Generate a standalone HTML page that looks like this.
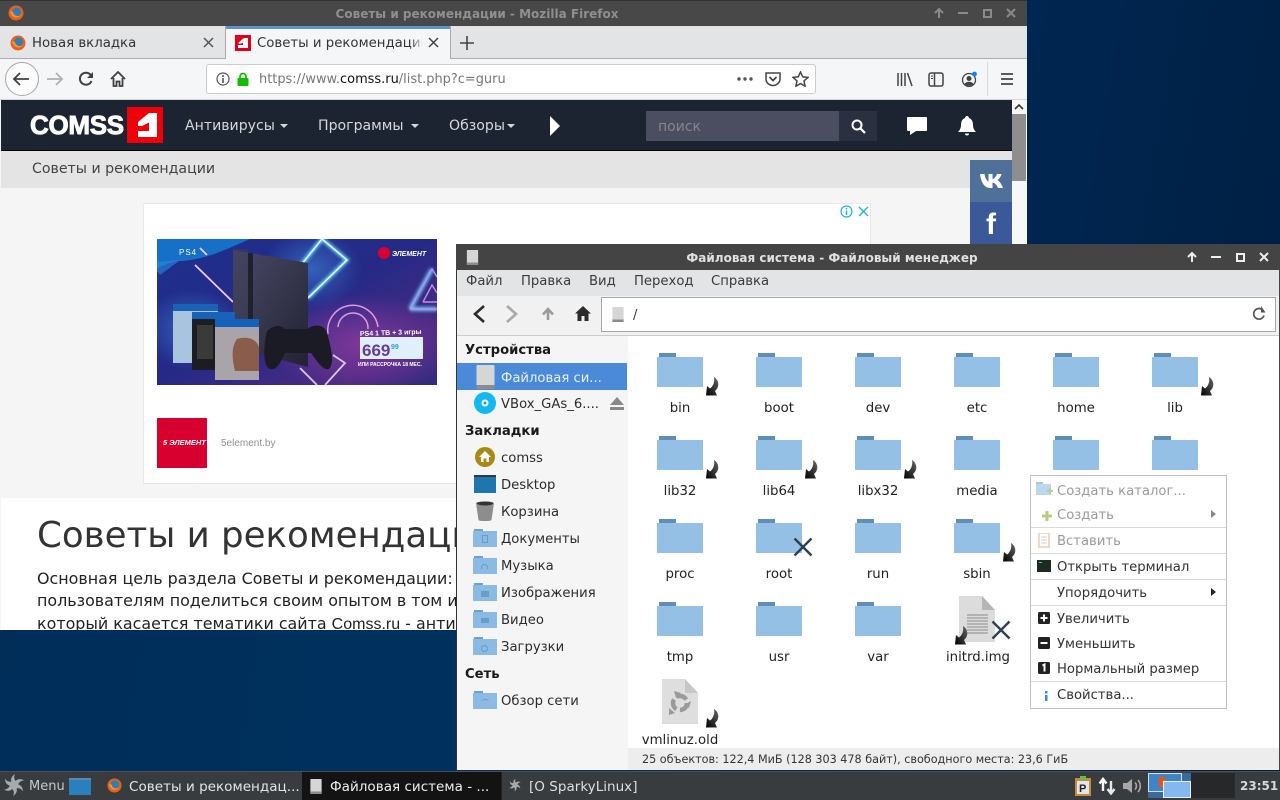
<!DOCTYPE html>
<html lang="ru"><head><meta charset="utf-8"><title>SparkyLinux</title>
<style>
html,body{margin:0;padding:0}
body{width:1280px;height:800px;overflow:hidden;position:relative;background:linear-gradient(100deg,#002d58 0%,#00315f 45%,#002650 75%,#001e40 100%);font-family:"DejaVu Sans","Liberation Sans",sans-serif;font-size:13px;color:#222}
div,span,svg{position:absolute;display:block}
.t{white-space:nowrap;line-height:16px}
.c{transform:translateX(-50%)}
.b{font-weight:bold}
b{font-weight:normal;color:#111}
.lbl{font-size:13.300px;color:#222;line-height:16px;white-space:nowrap;transform:translateX(-50%)}
.sb{font-size:13.200px;color:#2c2c2c;left:501px;line-height:16px;white-space:nowrap}
.sh{font-size:13.200px;font-weight:bold;color:#1a1a1a;left:465px;line-height:16px;white-space:nowrap}
.m{font-size:13.200px;color:#333;left:1057px;line-height:16px;white-space:nowrap}
.mf{color:#9a9a9a}
.sep{left:1031px;width:195px;height:1px;background:#d8d8d8}
.fm{font-size:13.200px;color:#3a3a3a;top:274px;line-height:16px}
.nv{font-size:14.100px;color:#d5d7da;top:118px;line-height:16px;white-space:nowrap}
.tk{font-size:13.550px;line-height:18px;white-space:nowrap;top:778px}
</style></head><body>
<svg width="0" height="0" style="left:0;top:0">
<defs>
<symbol id="fo" viewBox="0 0 46 34"><rect x="2" y="0" width="17" height="5" fill="#5f8fb8"/><rect x="0" y="4" width="46" height="30" fill="#94c0e5"/></symbol>
<linearGradient id="lg" x1="0" y1="1" x2="1" y2="0"><stop offset="0" stop-color="#000"/><stop offset="1" stop-color="#666"/></linearGradient>
<symbol id="ln" viewBox="0 0 13 19"><path d="M8 0C13 3 14 10 9 14L11 18.500 0 18.500 1 9 4 11.500C7 9.500 9 5 8 0Z" fill="url(#lg)"/></symbol>
<symbol id="xx" viewBox="0 0 20 20"><path d="M1.500 1.500L18.500 18.500M18.500 1.500L1.500 18.500" stroke="#2f4055" stroke-width="2.400" fill="none"/></symbol>
<symbol id="sf" viewBox="0 0 24 18"><rect x="1" y="0" width="9" height="3" fill="#6ba0cf"/><rect x="0" y="2" width="24" height="16" fill="#8bbbe4"/></symbol>
<symbol id="drv" viewBox="0 0 18 24"><rect width="18" height="24" rx="1" fill="#d6d6d6"/><rect y="20" width="18" height="4" fill="#8c8c8c"/></symbol>
<symbol id="ffx" viewBox="0 0 16 16"><circle cx="8" cy="8" r="7.500" fill="#e8601f"/><circle cx="8.500" cy="7" r="4.500" fill="#2e7fb8"/><path d="M2 6C3 13 10 15 14 9 12 12 6 12 5 7Z" fill="#f2952b"/></symbol>
<symbol id="spk" viewBox="0 0 24 24"><g fill="#a8aaac"><path d="M12 12C8 9 8 4 13 1 11 5 13 8 15 9Z"/><path d="M12 12C8 9 8 4 13 1 11 5 13 8 15 9Z" transform="rotate(60 12 12)"/><path d="M12 12C8 9 8 4 13 1 11 5 13 8 15 9Z" transform="rotate(120 12 12)"/><path d="M12 12C8 9 8 4 13 1 11 5 13 8 15 9Z" transform="rotate(180 12 12)"/><path d="M12 12C8 9 8 4 13 1 11 5 13 8 15 9Z" transform="rotate(240 12 12)"/><path d="M12 12C8 9 8 4 13 1 11 5 13 8 15 9Z" transform="rotate(300 12 12)"/></g></symbol>
</defs></svg>

<!-- Firefox window -->
<div style="left:0;top:0;width:1027px;height:630px;background:#f5f5f5;overflow:hidden">
 <div style="left:0;top:0;width:1027px;height:26px;background:#484848;border-top:1px solid #333;box-sizing:border-box"></div>
 <svg style="left:8px;top:5px" width="16" height="16"><use href="#ffx"/></svg>
 <div class="t b c" style="left:477px;top:6px;font-size:12px;color:#8f8f8f">Советы и рекомендации - Mozilla Firefox</div>
 <svg style="left:933px;top:7px" width="12" height="12" viewBox="0 0 12 12"><path d="M6 11V2M2 6l4-4 4 4" stroke="#8a8a8a" stroke-width="2" fill="none"/></svg>
 <div style="left:958px;top:12px;width:10px;height:2px;background:#8a8a8a"></div>
 <div style="left:983px;top:9px;width:5px;height:5px;border:2px solid #8a8a8a"></div>
 <svg style="left:1006px;top:8px" width="10" height="10" viewBox="0 0 10 10"><path d="M1 1L9 9M9 1L1 9" stroke="#8a8a8a" stroke-width="2"/></svg>

 <!-- tabs -->
 <div style="left:0;top:26px;width:1027px;height:33px;background:#e3e4e6;border-bottom:1px solid #aeaeae;box-sizing:border-box"></div>
 <div style="left:225px;top:26px;width:226px;height:33px;background:#f5f6f7;border-left:1px solid #aaa;border-right:1px solid #aaa;box-sizing:border-box"></div>
 <div style="left:226px;top:26px;width:224px;height:3px;background:#5b93c9"></div>
 <svg style="left:10px;top:35px" width="16" height="16"><use href="#ffx"/></svg>
 <div class="t" style="left:32px;top:36px;font-size:13.300px;color:#333">Новая вкладка</div>
 <svg style="left:203px;top:37px" width="11" height="11" viewBox="0 0 11 11"><path d="M1 1L10 10M10 1L1 10" stroke="#555" stroke-width="1.500"/></svg>
 <div style="left:235px;top:35px;width:16px;height:16px;background:#e0001a"></div>
 <svg style="left:235px;top:35px" width="16" height="16" viewBox="0 0 16 16"><path d="M3 8L9 3H13V13H3V10H8V7.500L5 9Z" fill="#fff"/></svg>
 <div style="left:257px;top:34px;width:165px;height:18px;overflow:hidden"><span class="t" style="left:0;top:2px;font-size:13.300px;color:#333">Советы и рекомендации</span></div>
 <div style="left:410px;top:34px;width:14px;height:18px;background:linear-gradient(90deg,rgba(245,246,247,0),#f5f6f7)"></div>
 <svg style="left:428px;top:37px" width="11" height="11" viewBox="0 0 11 11"><path d="M1 1L10 10M10 1L1 10" stroke="#444" stroke-width="1.500"/></svg>
 <svg style="left:460px;top:36px" width="14" height="14" viewBox="0 0 14 14"><path d="M7 0V14M0 7H14" stroke="#444" stroke-width="1.600"/></svg>

 <!-- nav -->
 <div style="left:0;top:59px;width:1027px;height:41px;background:#f5f6f7;border-bottom:1px solid #d4d4d4;box-sizing:border-box"></div>
 <div style="left:5px;top:62px;width:32px;height:32px;border-radius:50%;background:#fcfcfc;border:1px solid #a8a8a8"></div>
 <svg style="left:12px;top:71px" width="18" height="16" viewBox="0 0 18 16"><path d="M17 8H2M8 2L2 8l6 6" stroke="#404040" stroke-width="1.800" fill="none"/></svg>
 <svg style="left:46px;top:71px" width="18" height="16" viewBox="0 0 18 16"><path d="M1 8H16M10 2l6 6-6 6" stroke="#b0b0b0" stroke-width="1.800" fill="none"/></svg>
 <svg style="left:78px;top:71px" width="16" height="16" viewBox="0 0 16 16"><path d="M13.500 10A6 6 0 1 1 13 4.500" stroke="#404040" stroke-width="2" fill="none"/><path d="M15 1V7H9Z" fill="#404040"/></svg>
 <svg style="left:110px;top:71px" width="16" height="16" viewBox="0 0 16 16"><path d="M1 8L8 1l7 7M3.500 7V15H6.500V10.500H9.500V15H12.500V7" stroke="#404040" stroke-width="1.800" fill="none"/></svg>
 <div style="left:206px;top:64px;width:610px;height:30px;background:#fff;border:1px solid #ccc;border-radius:3px;box-sizing:border-box"></div>
 <svg style="left:216px;top:72px" width="14" height="14" viewBox="0 0 14 14"><circle cx="7" cy="7" r="6" stroke="#555" stroke-width="1.200" fill="none"/><path d="M7 6V11M7 3V5" stroke="#555" stroke-width="1.600"/></svg>
 <svg style="left:236px;top:72px" width="14" height="14" viewBox="0 0 14 14"><path d="M4 7V4.500a3 3 0 0 1 6 0V7" stroke="#12bc00" stroke-width="1.700" fill="none"/><rect x="1.500" y="6" width="11" height="8" rx="1" fill="#12bc00"/></svg>
 <div class="t" style="left:259px;top:72px;font-size:12.950px;color:#777">https://www.<b>comss.ru</b>/list.php?c=guru</div>
 <svg style="left:736px;top:76px" width="18" height="6"><circle cx="3" cy="3" r="1.700" fill="#555"/><circle cx="9" cy="3" r="1.700" fill="#555"/><circle cx="15" cy="3" r="1.700" fill="#555"/></svg>
 <svg style="left:765px;top:71px" width="16" height="16" viewBox="0 0 16 16"><path d="M1 2H15V8A7 6.500 0 0 1 1 8Z" stroke="#444" stroke-width="1.500" fill="none"/><path d="M4.500 6L8 9.500 11.500 6" stroke="#444" stroke-width="1.800" fill="none"/></svg>
 <svg style="left:792px;top:71px" width="17" height="16" viewBox="0 0 17 16"><path d="M8.500 1L10.700 5.800 16 6.400 12 10 13.100 15.200 8.500 12.600 3.900 15.200 5 10 1 6.400 6.300 5.800Z" stroke="#444" stroke-width="1.500" fill="none"/></svg>
 <svg style="left:897px;top:72px" width="16" height="15" viewBox="0 0 16 15"><path d="M1 1V14M4.500 1V14M8 1V14M10.500 1L15 14" stroke="#444" stroke-width="1.500"/></svg>
 <svg style="left:928px;top:72px" width="16" height="15" viewBox="0 0 16 15"><rect x="1" y="1" width="14" height="13" rx="2" stroke="#444" stroke-width="1.500" fill="none"/><path d="M6.500 1V14" stroke="#444" stroke-width="1.500"/><path d="M3 4H5M3 6.500H5" stroke="#444"/></svg>
 <svg style="left:961px;top:71px" width="17" height="17" viewBox="0 0 17 17"><circle cx="8" cy="9" r="6.500" stroke="#444" stroke-width="1.300" fill="none"/><circle cx="8" cy="7.500" r="2.500" fill="#444"/><path d="M3.500 13C5 10 11 10 12.500 13 10 15.500 6 15.500 3.500 13Z" fill="#444"/><circle cx="13.500" cy="3" r="2.400" fill="#0a84ff"/></svg>
 <div style="left:987px;top:62px;width:1px;height:34px;background:#d8d8d8"></div>
 <svg style="left:1000px;top:72px" width="14" height="14" viewBox="0 0 14 14"><path d="M1 2H13M1 7H13M1 12H13" stroke="#444" stroke-width="1.800"/></svg>

 <!-- page -->
 <div style="left:1px;top:100px;width:1011px;height:530px;background:#f5f5f5;overflow:hidden">
  <div style="left:0;top:0;width:1011px;height:50px;background:#1c2331;border-bottom:1px solid #000"></div>
  <div style="left:0;top:51px;width:1011px;height:37px;background:#e4e4e4"></div>
  <div style="left:0;top:398px;width:1011px;height:132px;background:#fff"></div>
 </div>
 <div class="t b" style="left:30px;top:110px;font-family:'Liberation Sans',sans-serif;font-size:26px;line-height:30px;color:#fff;letter-spacing:-.3px;-webkit-text-stroke:.9px #fff">COMSS</div>
 <div style="left:127px;top:107px;width:36px;height:36px;background:#f00008"></div>
 <svg style="left:127px;top:107px" width="36" height="36" viewBox="0 0 36 36"><path d="M11 15L22 6H30V30H11V24H22V15.500L15 19H11Z" fill="#fff"/></svg>
 <div class="nv" style="left:185px">Антивирусы</div>
 <div style="left:280px;top:124px;border:4px solid transparent;border-top:4px solid #d5d7da;border-bottom:0"></div>
 <div class="nv" style="left:318px">Программы</div>
 <div style="left:411px;top:124px;border:4px solid transparent;border-top:4px solid #d5d7da;border-bottom:0"></div>
 <div class="nv" style="left:449px">Обзоры</div>
 <div style="left:507px;top:124px;border:4px solid transparent;border-top:4px solid #d5d7da;border-bottom:0"></div>
 <div style="left:550px;top:116px;border-left:10px solid #fff;border-top:10px solid transparent;border-bottom:10px solid transparent"></div>
 <div style="left:646px;top:111px;width:193px;height:30px;background:#4b4d61"></div>
 <div style="left:839px;top:111px;width:38px;height:30px;background:#2b3040"></div>
 <div class="t" style="left:658px;top:119px;font-size:14px;color:#85868f">поиск</div>
 <svg style="left:851px;top:119px" width="15" height="15" viewBox="0 0 15 15"><circle cx="6" cy="6" r="4.500" stroke="#fff" stroke-width="2" fill="none"/><path d="M9.500 9.500L14 14" stroke="#fff" stroke-width="2.200"/></svg>
 <svg style="left:907px;top:117px" width="21" height="19" viewBox="0 0 21 19"><path d="M1 0H19a1 1 0 0 1 1 1V13a1 1 0 0 1-1 1H9L3 18V14H1a1 1 0 0 1-1-1V1a1 1 0 0 1 1-1Z" fill="#fff"/></svg>
 <svg style="left:958px;top:116px" width="18" height="20" viewBox="0 0 18 20"><path d="M9 0C10 0 11 1 11 2 14 3 15 6 15 9 15 12 16 14 18 16H0C2 14 3 12 3 9 3 6 4 3 7 2 7 1 8 0 9 0Z" fill="#fff"/><path d="M7 17.500H11A2 2 0 0 1 7 17.500Z" fill="#fff"/></svg>
 <div class="t" style="left:32px;top:161px;font-size:14.150px;color:#444">Советы и рекомендации</div>
 <div style="left:970px;top:160px;width:42px;height:42px;background:#4f7099"></div>
 <div style="left:970px;top:202px;width:42px;height:44px;background:#3b5998"></div>
 <svg style="left:980px;top:173px" width="23" height="15" viewBox="0 0 23 15"><path d="M0 1H4.500C5 5 7 8 8.500 8.500V1H12.500V6C14 6 16 3.500 17 1H21.500C21 3.500 19 6 17.500 7 19 8 21.500 10.500 23 15H18C17 12 15 10 12.500 9.500V15H10.500C4 15 1 9 0 1Z" fill="#fff"/></svg>
 <div class="t b" style="left:986px;top:210px;font-family:'Liberation Sans',sans-serif;font-size:30px;line-height:30px;color:#fff">f</div>

 <div style="left:1012px;top:100px;width:15px;height:530px;background:#f7f7f7"></div>
 <div style="left:1012px;top:114px;width:14px;height:67px;background:#8e8e8e"></div>
 <svg style="left:1014px;top:103px" width="10" height="8" viewBox="0 0 10 8"><path d="M1 6L5 2l4 4" stroke="#333" stroke-width="1.600" fill="none"/></svg>

 <!-- ad -->
 <div style="left:143px;top:203px;width:726px;height:279px;background:#fff;border:1px solid #e8e8e8"></div>
 <svg style="left:840px;top:205px" width="13" height="13" viewBox="0 0 13 13"><circle cx="6.500" cy="6.500" r="5.500" stroke="#1fb5dc" stroke-width="1.200" fill="none"/><path d="M6.500 5.500V10M6.500 3V4.500" stroke="#1fb5dc" stroke-width="1.500"/></svg>
 <svg style="left:858px;top:206px" width="11" height="11" viewBox="0 0 11 11"><path d="M1 1L10 10M10 1L1 10" stroke="#1fb5dc" stroke-width="1.400"/></svg>
 <svg style="left:157px;top:239px" width="280" height="146" viewBox="0 0 280 146">
  <defs>
   <linearGradient id="ad" x1="0" y1="0" x2="1" y2="1"><stop offset="0" stop-color="#1d2f8e"/><stop offset=".5" stop-color="#262a86"/><stop offset=".8" stop-color="#4a2a82"/><stop offset="1" stop-color="#322b80"/></linearGradient>
   <radialGradient id="pur" cx=".5" cy=".5" r=".5"><stop offset="0" stop-color="#8a3a9e" stop-opacity=".85"/><stop offset="1" stop-color="#8a3a9e" stop-opacity="0"/></radialGradient>
   <radialGradient id="cy" cx=".5" cy=".5" r=".5"><stop offset="0" stop-color="#3a78d0" stop-opacity=".7"/><stop offset="1" stop-color="#3a78d0" stop-opacity="0"/></radialGradient>
   <linearGradient id="ps" x1="0" y1="0" x2="1" y2="1"><stop offset="0" stop-color="#4a4a68"/><stop offset="1" stop-color="#222233"/></linearGradient>
   <filter id="gl" x="-20%" y="-20%" width="140%" height="140%"><feGaussianBlur stdDeviation="1.500"/></filter>
  </defs>
  <rect width="280" height="146" fill="url(#ad)"/>
  <ellipse cx="205" cy="105" rx="95" ry="50" fill="url(#pur)"/>
  <ellipse cx="155" cy="30" rx="50" ry="40" fill="url(#cy)"/>
  <ellipse cx="35" cy="90" rx="50" ry="40" fill="url(#cy)"/>
  <path d="M0 0H93C70 10 50 20 25 22 15 22 5 26 0 30Z" fill="#1670c8"/>
  <path d="M0 22C8 24 14 20 22 22L3 36 0 32Z" fill="#2a8ae0" opacity=".6"/>
  <g stroke="#5fd0ff" stroke-width="4" fill="none" filter="url(#gl)"><path d="M140 31L165 0 190 21 151 59"/><path d="M253 70H280M253 70L275 30"/></g>
  <g stroke="#e0f6ff" stroke-width="1.600" fill="none"><path d="M140 31L165 0 190 21 151 59"/></g>
  <path d="M38 26L76 63M43 9L50 16" stroke="#f6c8ee" stroke-width="1.800"/>
  <path d="M253 70H280M253 70L275 30 280 38M266 63H280M266 63L275 46 280 54" stroke="#c58be8" stroke-width="1.400" fill="none"/>
  <path d="M171 95A25 25 0 0 1 221 88M181 88A15 15 0 0 1 211 90" stroke="#e09ade" stroke-width="1.500" fill="none"/>
  <path d="M143 129L160 146M168 146L188 124 176 116" stroke="#d8c8f0" stroke-width="1.800" fill="none"/>
  <path d="M76 11L151 24V128L76 108Z" fill="url(#ps)"/>
  <rect x="91" y="14" width="5" height="98" fill="#202030"/>
  <rect x="76" y="10" width="15" height="100" fill="#3e3e58" opacity=".5"/>
  <path d="M16 65H61V124H16Z" fill="#a9c4de"/><rect x="16" y="65" width="45" height="7" fill="#1a62b8"/>
  <path d="M35 73H78V131H35Z" fill="#1c1c22"/><rect x="35" y="73" width="43" height="7" fill="#1a62b8"/>
  <path d="M40 86H56V120H40Z" fill="#3a3a38"/>
  <path d="M58 80H102V141H58Z" fill="#a9a4aa"/><rect x="58" y="80" width="44" height="8" fill="#1262bc"/>
  <path d="M80 100C92 96 102 102 102 110V132H78C75 120 74 108 80 100Z" fill="#8a5c4c"/>
  <path d="M110 92C118 85 124 86 128 90H150C158 84 168 86 170 94 174 108 178 124 172 130 166 132 160 122 154 114H128C124 122 120 132 113 130 106 128 106 108 110 92Z" fill="#1b1b25"/>
  <rect x="203" y="98" width="63" height="22" fill="#dff0fb"/>
  <text x="205" y="117" font-family="Liberation Sans,sans-serif" font-weight="bold" font-size="17" fill="#6a3a9e">669</text>
  <text x="234" y="110" font-family="Liberation Sans,sans-serif" font-weight="bold" font-size="7" fill="#28a6dc">99</text>
  <text x="203" y="97" font-family="Liberation Sans,sans-serif" font-weight="bold" font-size="7" fill="#fff" transform="rotate(-2 203 97)">PS4 1 TB + 3 игры</text>
  <text x="201" y="127" font-family="Liberation Sans,sans-serif" font-weight="bold" font-size="5" fill="#fff">ИЛИ РАССРОЧКА 18 МЕС.</text>
  <circle cx="227" cy="14" r="6" fill="#d8002f"/>
  <text x="235" y="17" font-family="Liberation Sans,sans-serif" font-weight="bold" font-style="italic" font-size="7" fill="#fff">ЭЛЕМЕНТ</text>
  <text x="22" y="16" font-family="Liberation Sans,sans-serif" font-size="8" fill="#fff" letter-spacing="1">PS4</text>
 </svg>
 <div style="left:157px;top:418px;width:50px;height:50px;background:#d8002f"></div>
 <div class="t b" style="left:163px;top:435px;font-family:'Liberation Sans',sans-serif;font-size:7.500px;font-style:italic;color:#fff">5 ЭЛЕМЕНТ</div>
 <div class="t" style="left:221px;top:436px;font-family:'Liberation Sans',sans-serif;font-size:10px;color:#909090">5element.by</div>

 <div class="t" style="left:37px;top:514px;font-size:35.600px;line-height:44px;color:#333">Советы и рекомендации</div>
 <div class="t" style="left:37px;top:571px;font-size:15.900px;color:#222">Основная цель раздела Советы и рекомендации: дать</div>
 <div class="t" style="left:37px;top:593px;font-size:15.900px;color:#222">пользователям поделиться своим опытом в том или ином вопросе,</div>
 <div class="t" style="left:37px;top:616px;font-size:15.900px;color:#222">который касается тематики сайта <span style="position:static;display:inline;font-family:'Liberation Sans',sans-serif;font-size:16px">Comss.ru</span> - антивирусы</div>
</div>

<!-- File manager window -->
<div style="left:456px;top:244px;width:824px;height:526px;background:#fff;border-left:1px solid #333;border-right:1px solid #444;box-sizing:border-box"></div>
<div style="left:456px;top:244px;width:824px;height:26px;background:#444"></div>
<svg style="left:466px;top:250px" width="13" height="15"><use href="#drv"/></svg>
<div class="t b c" style="left:832px;top:250px;font-size:12px;color:#e0e0e0">Файловая система - Файловый менеджер</div>
<svg style="left:1186px;top:251px" width="12" height="12" viewBox="0 0 12 12"><path d="M6 11V2M2 6l4-4 4 4" stroke="#eee" stroke-width="2" fill="none"/></svg>
<div style="left:1211px;top:256px;width:10px;height:2px;background:#eee"></div>
<div style="left:1236px;top:253px;width:5px;height:5px;border:2px solid #eee"></div>
<svg style="left:1259px;top:252px" width="10" height="10" viewBox="0 0 10 10"><path d="M1 1L9 9M9 1L1 9" stroke="#eee" stroke-width="2"/></svg>

<div style="left:457px;top:270px;width:822px;height:26px;background:#e3e4e6"></div>
<div class="fm" style="left:466px">Файл</div><div class="fm" style="left:521px">Правка</div><div class="fm" style="left:589px">Вид</div><div class="fm" style="left:634px">Переход</div><div class="fm" style="left:711px">Справка</div>
<div style="left:457px;top:296px;width:822px;height:40px;background:#f1f1f1;border-bottom:1px solid #ccc;box-sizing:border-box"></div>
<svg style="left:472px;top:304px" width="14" height="20" viewBox="0 0 14 20"><path d="M12 2L3 10l9 8" stroke="#2b2b2b" stroke-width="2.600" fill="none"/></svg>
<svg style="left:505px;top:304px" width="14" height="20" viewBox="0 0 14 20"><path d="M2 2L11 10 2 18" stroke="#a8a8a8" stroke-width="2.600" fill="none"/></svg>
<svg style="left:541px;top:307px" width="14" height="14" viewBox="0 0 14 14"><path d="M7 13V3M2 7.500L7 2l5 5.500" stroke="#9a9a9a" stroke-width="2.600" fill="none"/></svg>
<svg style="left:575px;top:306px" width="16" height="15" viewBox="0 0 16 15"><path d="M8 0L16 7.500H13.500V15H9.500V10H6.500V15H2.500V7.500H0Z" fill="#2b2b2b"/></svg>
<div style="left:601px;top:297px;width:675px;height:35px;background:#fff;border:1px solid #a8a8a8;box-sizing:border-box"></div>
<svg style="left:612px;top:307px" width="12" height="15"><use href="#drv"/></svg>
<div class="t" style="left:633px;top:308px;font-size:13px;color:#333">/</div>
<svg style="left:1252px;top:306px" width="14" height="15" viewBox="0 0 14 15"><path d="M12 9.500A5.300 5.300 0 1 1 10 3.500" stroke="#555" stroke-width="1.700" fill="none"/><path d="M9 0V6.500H13.500Z" fill="#555"/></svg>

<!-- sidebar -->
<div style="left:457px;top:336px;width:171px;height:434px;background:#f5f5f5"></div>
<div style="left:457px;top:363px;width:170px;height:27px;background:#4a8ad8"></div>
<div class="sh" style="top:343px">Устройства</div>
<svg style="left:476px;top:365px" width="19" height="24"><use href="#drv"/></svg>
<div class="sb" style="top:371px;color:#e8f0fa">Файловая си...</div>
<svg style="left:474px;top:392px" width="22" height="22" viewBox="0 0 22 22"><circle cx="11" cy="11" r="11" fill="#12b8f0"/><circle cx="11" cy="11" r="3.500" fill="#fff"/><circle cx="11" cy="11" r="1.500" fill="#1aa0d8"/></svg>
<div class="sb" style="top:397px">VBox_GAs_6....</div>
<svg style="left:610px;top:397px" width="14" height="13" viewBox="0 0 14 13"><path d="M7 0L14 8H0Z" fill="#888"/><rect y="10" width="14" height="3" fill="#888"/></svg>
<div class="sh" style="top:424px">Закладки</div>
<svg style="left:475px;top:447px" width="20" height="20" viewBox="0 0 20 20"><circle cx="10" cy="10" r="10" fill="#a88a12"/><path d="M10 4L16 10H14V15H11.500V11.500H8.500V15H6V10H4Z" fill="#fff"/></svg>
<div class="sb" style="top:451px">comss</div>
<div style="left:474px;top:475px;width:22px;height:18px;background:#1f75ad;border-top:2px solid #2a3a46;box-sizing:border-box"></div>
<div class="sb" style="top:478px">Desktop</div>
<svg style="left:476px;top:501px" width="18" height="20" viewBox="0 0 18 20"><path d="M0 2C0 0 18 0 18 2L15.500 19C15 20.500 3 20.500 2.500 19Z" fill="#8d8d8d"/><ellipse cx="9" cy="2.500" rx="8" ry="2" fill="#333"/></svg>
<div class="sb" style="top:505px">Корзина</div>
<svg style="left:473px;top:529px" width="24" height="18"><use href="#sf"/></svg><div class="sb" style="top:532px">Документы</div>
<svg style="left:473px;top:556px" width="24" height="18"><use href="#sf"/></svg><div class="sb" style="top:559px">Музыка</div>
<svg style="left:473px;top:583px" width="24" height="18"><use href="#sf"/></svg><div class="sb" style="top:586px">Изображения</div>
<svg style="left:473px;top:610px" width="24" height="18"><use href="#sf"/></svg><div class="sb" style="top:613px">Видео</div>
<svg style="left:473px;top:637px" width="24" height="18"><use href="#sf"/></svg><div class="sb" style="top:640px">Загрузки</div>
<div style="left:482px;top:535px;width:6px;height:8px;border:1px solid #6a9cc8;box-sizing:border-box"></div>
<div style="left:481px;top:564px;width:7px;height:5px;border:1px solid #6a9cc8;border-bottom:0;border-radius:4px 4px 0 0;box-sizing:border-box"></div>
<div style="left:481px;top:591px;width:8px;height:6px;background:#6a9cc8"></div>
<div style="left:481px;top:618px;width:8px;height:5px;background:#6a9cc8"></div>
<div style="left:481px;top:645px;width:7px;height:7px;border:1px solid #6a9cc8;border-radius:50%;box-sizing:border-box"></div>
<div class="sh" style="top:667px">Сеть</div>
<svg style="left:473px;top:691px" width="24" height="18"><use href="#sf"/></svg><div class="sb" style="top:694px">Обзор сети</div>
<div style="left:481px;top:699px;width:8px;height:5px;border-top:1px solid #6a9cc8;border-radius:50%"></div>

<!-- folders -->
<svg style="left:657px;top:353px" width="46" height="34"><use href="#fo"/></svg>
<svg style="left:756px;top:353px" width="46" height="34"><use href="#fo"/></svg>
<svg style="left:855px;top:353px" width="46" height="34"><use href="#fo"/></svg>
<svg style="left:954px;top:353px" width="46" height="34"><use href="#fo"/></svg>
<svg style="left:1053px;top:353px" width="46" height="34"><use href="#fo"/></svg>
<svg style="left:1152px;top:353px" width="46" height="34"><use href="#fo"/></svg>
<svg style="left:657px;top:436px" width="46" height="34"><use href="#fo"/></svg>
<svg style="left:756px;top:436px" width="46" height="34"><use href="#fo"/></svg>
<svg style="left:855px;top:436px" width="46" height="34"><use href="#fo"/></svg>
<svg style="left:954px;top:436px" width="46" height="34"><use href="#fo"/></svg>
<svg style="left:1053px;top:436px" width="46" height="34"><use href="#fo"/></svg>
<svg style="left:1152px;top:436px" width="46" height="34"><use href="#fo"/></svg>
<svg style="left:657px;top:519px" width="46" height="34"><use href="#fo"/></svg>
<svg style="left:756px;top:519px" width="46" height="34"><use href="#fo"/></svg>
<svg style="left:855px;top:519px" width="46" height="34"><use href="#fo"/></svg>
<svg style="left:954px;top:519px" width="46" height="34"><use href="#fo"/></svg>
<svg style="left:657px;top:602px" width="46" height="34"><use href="#fo"/></svg>
<svg style="left:756px;top:602px" width="46" height="34"><use href="#fo"/></svg>
<svg style="left:855px;top:602px" width="46" height="34"><use href="#fo"/></svg>

<!-- initrd -->
<svg style="left:959px;top:596px" width="37" height="46" viewBox="0 0 37 46"><path d="M0 0H23L36 14V46H0Z" fill="#dcdcdc"/><path d="M23 0L36 14H23Z" fill="#b5b5b5"/><path d="M8 19H29M8 22H29M8 25H29M8 28H29M8 31H29M8 34H29M8 37H29" stroke="#8a8a8a"/></svg>
<!-- vmlinuz -->
<svg style="left:662px;top:679px" width="37" height="45" viewBox="0 0 37 45"><path d="M0 0H23L36 14V45H0Z" fill="#dedede"/><path d="M23 0L36 14H23Z" fill="#c6c6c6"/><circle cx="18" cy="24" r="7" fill="none" stroke="#9a9a9a" stroke-width="4.500" stroke-dasharray="11 3.600"/><path d="M12 12L19 14 14 19ZM29 22L27 29 22 26ZM7 29L13 34 7 36Z" fill="#9a9a9a"/></svg>

<!-- symlinks -->
<svg style="left:706px;top:377px" width="13" height="19"><use href="#ln"/></svg>
<svg style="left:1201px;top:377px" width="13" height="19"><use href="#ln"/></svg>
<svg style="left:706px;top:460px" width="13" height="19"><use href="#ln"/></svg>
<svg style="left:805px;top:460px" width="13" height="19"><use href="#ln"/></svg>
<svg style="left:904px;top:460px" width="13" height="19"><use href="#ln"/></svg>
<svg style="left:1003px;top:543px" width="13" height="19"><use href="#ln"/></svg>
<svg style="left:955px;top:626px" width="13" height="19"><use href="#ln"/></svg>
<svg style="left:706px;top:709px" width="13" height="19"><use href="#ln"/></svg>
<svg style="left:793px;top:537px" width="20" height="20"><use href="#xx"/></svg>
<svg style="left:991px;top:620px" width="20" height="20"><use href="#xx"/></svg>

<!-- labels -->
<div class="lbl" style="left:680px;top:401px">bin</div><div class="lbl" style="left:779px;top:401px">boot</div><div class="lbl" style="left:878px;top:401px">dev</div><div class="lbl" style="left:977px;top:401px">etc</div><div class="lbl" style="left:1076px;top:401px">home</div><div class="lbl" style="left:1175px;top:401px">lib</div>
<div class="lbl" style="left:680px;top:484px">lib32</div><div class="lbl" style="left:779px;top:484px">lib64</div><div class="lbl" style="left:878px;top:484px">libx32</div><div class="lbl" style="left:977px;top:484px">media</div>
<div class="lbl" style="left:680px;top:567px">proc</div><div class="lbl" style="left:779px;top:567px">root</div><div class="lbl" style="left:878px;top:567px">run</div><div class="lbl" style="left:977px;top:567px">sbin</div>
<div class="lbl" style="left:680px;top:650px">tmp</div><div class="lbl" style="left:779px;top:650px">usr</div><div class="lbl" style="left:878px;top:650px">var</div><div class="lbl" style="left:978px;top:650px">initrd.img</div>
<div class="lbl" style="left:680px;top:733px">vmlinuz.old</div>

<!-- status -->
<div style="left:628px;top:748px;width:651px;height:22px;background:#ededed"></div>
<div class="t" style="left:642px;top:752px;font-size:11.200px;color:#333">25 объектов: 122,4 МиБ (128 303 478 байт), свободного места: 23,6 ГиБ</div>

<!-- context menu -->
<div style="left:1030px;top:475px;width:197px;height:234px;background:#fff;border:1px solid #c0c0c0;box-sizing:border-box"></div>
<svg style="left:1036px;top:482px" width="18" height="15" viewBox="0 0 18 15"><rect x="0" y="0" width="7" height="3" fill="#a6c8e2"/><rect y="2" width="15" height="11" fill="#bcd8ee"/><path d="M11 9H17M14 6V12" stroke="#b8cf8e" stroke-width="2"/></svg>
<div class="m mf" style="top:484px">Создать каталог...</div>
<svg style="left:1042px;top:511px" width="10" height="10" viewBox="0 0 10 10"><path d="M5 0V10M0 5H10" stroke="#b4cc7c" stroke-width="3"/></svg>
<div class="m mf" style="top:508px">Создать</div>
<div style="left:1211px;top:510px;border-left:5px solid #888;border-top:4px solid transparent;border-bottom:4px solid transparent"></div>
<div class="sep" style="top:527px"></div>
<svg style="left:1038px;top:533px" width="12" height="15" viewBox="0 0 12 15"><rect width="12" height="15" fill="#f0d8c4"/><rect x="2" y="1" width="8" height="12" fill="#fff"/><path d="M3 4H9M3 7H9M3 10H9" stroke="#ccc"/></svg>
<div class="m mf" style="top:534px">Вставить</div>
<div class="sep" style="top:553px"></div>
<div style="left:1037px;top:560px;width:14px;height:12px;background:#1c2a24"></div>
<div style="left:1039px;top:562px;width:3px;height:1px;background:#5ac85a"></div>
<div class="m" style="top:560px">Открыть терминал</div>
<div class="sep" style="top:579px"></div>
<div class="m" style="top:586px">Упорядочить</div>
<div style="left:1211px;top:588px;border-left:5px solid #222;border-top:4px solid transparent;border-bottom:4px solid transparent"></div>
<div class="sep" style="top:605px"></div>
<svg style="left:1038px;top:612px" width="12" height="12" viewBox="0 0 12 12"><rect width="12" height="12" rx="1.500" fill="#222"/><path d="M6 2.500V9.500M2.500 6H9.500" stroke="#fff" stroke-width="2"/></svg>
<div class="m" style="top:612px">Увеличить</div>
<svg style="left:1038px;top:637px" width="12" height="12" viewBox="0 0 12 12"><rect width="12" height="12" rx="1.500" fill="#222"/><path d="M2.500 6H9.500" stroke="#fff" stroke-width="2"/></svg>
<div class="m" style="top:637px">Уменьшить</div>
<svg style="left:1038px;top:662px" width="12" height="12" viewBox="0 0 12 12"><rect width="12" height="12" rx="1.500" fill="#222"/><path d="M4.500 3.500L6.500 2.500V9.500" stroke="#fff" stroke-width="2" fill="none"/></svg>
<div class="m" style="top:662px">Нормальный размер</div>
<div class="sep" style="top:681px"></div>
<svg style="left:1044px;top:691px" width="4" height="10" viewBox="0 0 4 10"><rect x="1" y="0" width="2.500" height="2.500" fill="#3c8ad8"/><rect x="1" y="4" width="2.500" height="6" fill="#3c8ad8"/></svg>
<div class="m" style="top:688px">Свойства...</div>

<!-- taskbar -->
<div style="left:0;top:771px;width:1280px;height:29px;background:#383c3e;border-top:1px solid #4a5054;box-sizing:border-box"></div>
<svg style="left:2px;top:773px" width="24" height="24"><use href="#spk"/></svg>
<div class="tk" style="left:29px;font-size:13px;color:#c8c8c8">Menu</div>
<div style="left:69px;top:778px;width:22px;height:17px;background:#2a7fbe;border-top:2px solid #5a8aa8;box-sizing:border-box"></div>
<svg style="left:107px;top:778px" width="15" height="15"><use href="#ffx"/></svg>
<div class="tk" style="left:129px;color:#e4e4e4">Советы и рекомендац...</div>
<div style="left:302px;top:772px;width:199px;height:28px;background:#131313"></div>
<svg style="left:310px;top:779px" width="12" height="15"><use href="#drv"/></svg>
<div class="tk" style="left:330px;color:#eee">Файловая система - ...</div>
<div style="left:501px;top:772px;width:1px;height:28px;background:#222"></div>
<svg style="left:508px;top:778px" width="14" height="14"><use href="#spk"/></svg>
<div class="tk" style="left:529px;color:#dedede">[O SparkyLinux]</div>
<svg style="left:1075px;top:776px" width="16" height="20" viewBox="0 0 16 20"><rect x="0" y="2" width="16" height="18" fill="#c88a3a"/><rect x="5" y="0" width="6" height="4" fill="#6aba4a"/><rect x="2" y="5" width="12" height="13" fill="#dfe6ee"/><text x="4" y="16" font-family="Liberation Sans,sans-serif" font-weight="bold" font-size="11" fill="#222">P</text></svg>
<svg style="left:1098px;top:777px" width="18" height="18" viewBox="0 0 18 18"><path d="M5 14V3M1.500 6.500L5 2l3.500 4.500" stroke="#fff" stroke-width="2.400" fill="none"/><path d="M13 4V16M9.500 12L13 16.500 16.500 12" stroke="#e8e8e8" stroke-width="2.400" fill="none"/></svg>
<svg style="left:1122px;top:777px" width="21" height="18" viewBox="0 0 21 18"><path d="M1 6H5L10 2V16L5 12H1Z" fill="#a8a8a8"/><path d="M13 5.500A5 5 0 0 1 13 12.500M16 3A9 9 0 0 1 16 15" stroke="#a8a8a8" stroke-width="1.600" fill="none"/></svg>
<div style="left:1148px;top:773px;width:43px;height:25px;background:#3a6a9e"></div>
<div style="left:1148px;top:773px;width:34px;height:19px;background:#3f83c9;border:1px solid #cfe3f5;box-sizing:border-box"></div>
<div style="left:1158px;top:776px;width:8px;height:12px;background:#d8582a;border-radius:50%"></div>
<div style="left:1163px;top:781px;width:28px;height:17px;background:#86b8f0;border:1px solid #e6f0fa;box-sizing:border-box"></div>
<div style="left:1191px;top:773px;width:44px;height:25px;background:#262829"></div>
<div class="t b" style="left:1240px;top:778px;font-size:12px;color:#d8d8d8">23:51</div>
</body></html>
